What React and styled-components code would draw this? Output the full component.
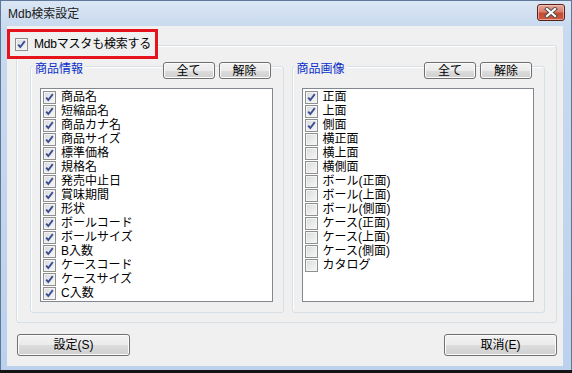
import React from 'react';
import styled, { createGlobalStyle } from 'styled-components';

const FONT = '"Liberation Sans", "Noto Sans CJK JP", sans-serif';

const GlobalStyle = createGlobalStyle`
  html, body {
    margin: 0;
    padding: 0;
    background: #151515;
  }
  body {
    font-family: ${FONT};
    font-size: 12px;
    color: #000000;
  }
`;

const Page = styled.div`
  width: 572px;
  height: 373px;
  overflow: hidden;
  background: #151515;
`;

const Window = styled.div`
  box-sizing: border-box;
  width: 572px;
  height: 370px;
  display: flex;
  flex-direction: column;
  border: 1px solid #5d7899;
  border-bottom: none;
  background: linear-gradient(180deg, #dbe6f4 0px, #c8daef 26px, #bcd1ec 100%);
  padding: 0 8px 4px 6px;
`;

const TitleBar = styled.div`
  height: 25px;
  display: flex;
  align-items: center;
  justify-content: space-between;
  padding-left: 1px;
  margin-right: -2px;
`;

const TitleText = styled.span`
  font-size: 12px;
  line-height: 14px;
  color: #1a1a1a;
  margin-top: 1px;
`;

const CloseButton = styled.div`
  box-sizing: border-box;
  width: 28px;
  height: 17px;
  margin-top: -3px;
  display: flex;
  align-items: center;
  justify-content: center;
  border: 1px solid #5b2019;
  border-radius: 3px;
  background: linear-gradient(180deg, #e6a699 0%, #d8806f 45%, #c44a33 55%, #cc5a42 100%);
  box-shadow: inset 0 0 0 1px rgba(255, 220, 210, 0.55);
`;

const Client = styled.div`
  flex: 1;
  display: flex;
  flex-direction: column;
  background: #f0f0f0;
  padding: 3px 6px 0 0;
`;

const Highlight = styled.div`
  box-sizing: border-box;
  align-self: flex-start;
  position: relative;
  z-index: 1;
  width: 151px;
  height: 30px;
  border: 3px solid #e5131d;
  background: #f0f0f0;
  display: flex;
  align-items: center;
  gap: 6px;
  padding-left: 5px;
`;

const HighlightText = styled.span`
  line-height: 14px;
  white-space: nowrap;
  letter-spacing: -0.2px;
`;

const OuterGroup = styled.div`
  box-sizing: border-box;
  height: 278px;
  margin: -14px 0 0 9px;
  display: flex;
  gap: 8px;
  border: 1px solid #d5dfe5;
  border-radius: 3px;
  box-shadow: inset 1px 1px 0 #ffffff;
  padding: 16px 11px 9px 13px;
`;

const InnerGroup = styled.div`
  flex: 1;
  display: flex;
  flex-direction: column;
  margin-top: 4px;
  border: 1px solid #d5dfe5;
  border-radius: 3px;
  box-shadow: inset 1px 1px 0 #ffffff;
  padding: 0 10px 10px 9px;
`;

const GroupHeader = styled.div`
  height: 17px;
  margin-top: -5px;
  display: flex;
  align-items: center;
  justify-content: space-between;
`;

const GroupLabel = styled.span`
  margin-left: -7px;
  padding: 0 2px;
  background: #f0f0f0;
  color: #0a2fc8;
  line-height: 14px;
  align-self: flex-start;
`;

const SmallButtons = styled.div`
  display: flex;
  gap: 4px;
  margin-right: 2px;
`;

const Button = styled.button`
  box-sizing: border-box;
  width: ${(p) => p.$width}px;
  height: ${(p) => p.$height}px;
  padding: 0;
  font-family: ${FONT};
  font-size: 12px;
  line-height: 14px;
  color: #000000;
  border: 1px solid #707070;
  border-radius: 3px;
  background: linear-gradient(180deg, #f2f2f2 0%, #ebebeb 50%, #dddddd 50%, #cfcfcf 100%);
  box-shadow: inset 0 0 0 1px #fcfcfc;
`;

const ListBox = styled.div`
  flex: 1;
  margin-top: 9px;
  border: 1px solid #828790;
  background: #ffffff;
  padding: 1px 2px;
  display: flex;
  flex-direction: column;
`;

const Item = styled.div`
  height: 14px;
  display: flex;
  align-items: center;
  gap: 5px;
  white-space: nowrap;
  line-height: 14px;
`;

const Box = styled.span`
  box-sizing: border-box;
  flex: none;
  width: 13px;
  height: 13px;
  border: 1px solid #8e8f8f;
  background: linear-gradient(135deg, #d6d9de 0%, #ececec 60%, #f7f7f7 100%);
  box-shadow: inset 0 0 0 1px #f4f4f4;
  display: flex;
  align-items: center;
  justify-content: center;
`;

const Footer = styled.div`
  display: flex;
  justify-content: space-between;
  margin-top: 11px;
  padding-left: 10px;
`;

const CheckBox = ({ checked }) => (
  <Box>
    {checked && (
      <svg width="11" height="11" viewBox="0 0 11 11">
        <path d="M2.2 5.6 L4.3 8 L8.8 2.2" fill="none" stroke="#3b4f94" strokeWidth="1.9" />
      </svg>
    )}
  </Box>
);

const productInfo = [
  '商品名', '短縮品名', '商品カナ名', '商品サイズ', '標準価格', '規格名', '発売中止日',
  '賞味期間', '形状', 'ボールコード', 'ボールサイズ', 'B入数', 'ケースコード', 'ケースサイズ', 'C入数',
];

const productImages = [
  { name: '正面', on: true },
  { name: '上面', on: true },
  { name: '側面', on: true },
  { name: '横正面' },
  { name: '横上面' },
  { name: '横側面' },
  { name: 'ボール(正面)' },
  { name: 'ボール(上面)' },
  { name: 'ボール(側面)' },
  { name: 'ケース(正面)' },
  { name: 'ケース(上面)' },
  { name: 'ケース(側面)' },
  { name: 'カタログ' },
];

const Group = ({ title, items }) => (
  <InnerGroup>
    <GroupHeader>
      <GroupLabel>{title}</GroupLabel>
      <SmallButtons>
        <Button $width={52} $height={17}>全て</Button>
        <Button $width={52} $height={17}>解除</Button>
      </SmallButtons>
    </GroupHeader>
    <ListBox>
      {items.map((it) => (
        <Item key={it.name}>
          <CheckBox checked={it.on} />
          <span>{it.name}</span>
        </Item>
      ))}
    </ListBox>
  </InnerGroup>
);

export default function App() {
  return (
    <Page>
      <GlobalStyle />
      <Window>
        <TitleBar>
          <TitleText>Mdb検索設定</TitleText>
          <CloseButton>
            <svg width="14" height="11" viewBox="0 0 14 11">
              <path d="M3 2 L11 9 M11 2 L3 9" stroke="#4a4a4a" strokeWidth="4" strokeLinecap="square" />
              <path d="M3 2 L11 9 M11 2 L3 9" stroke="#ffffff" strokeWidth="2.2" strokeLinecap="square" />
            </svg>
          </CloseButton>
        </TitleBar>
        <Client>
          <Highlight>
            <CheckBox checked />
            <HighlightText>Mdbマスタも検索する</HighlightText>
          </Highlight>
          <OuterGroup>
            <Group title="商品情報" items={productInfo.map((name) => ({ name, on: true }))} />
            <Group title="商品画像" items={productImages} />
          </OuterGroup>
          <Footer>
            <Button $width={113} $height={22}>設定(S)</Button>
            <Button $width={113} $height={22}>取消(E)</Button>
          </Footer>
        </Client>
      </Window>
    </Page>
  );
}
